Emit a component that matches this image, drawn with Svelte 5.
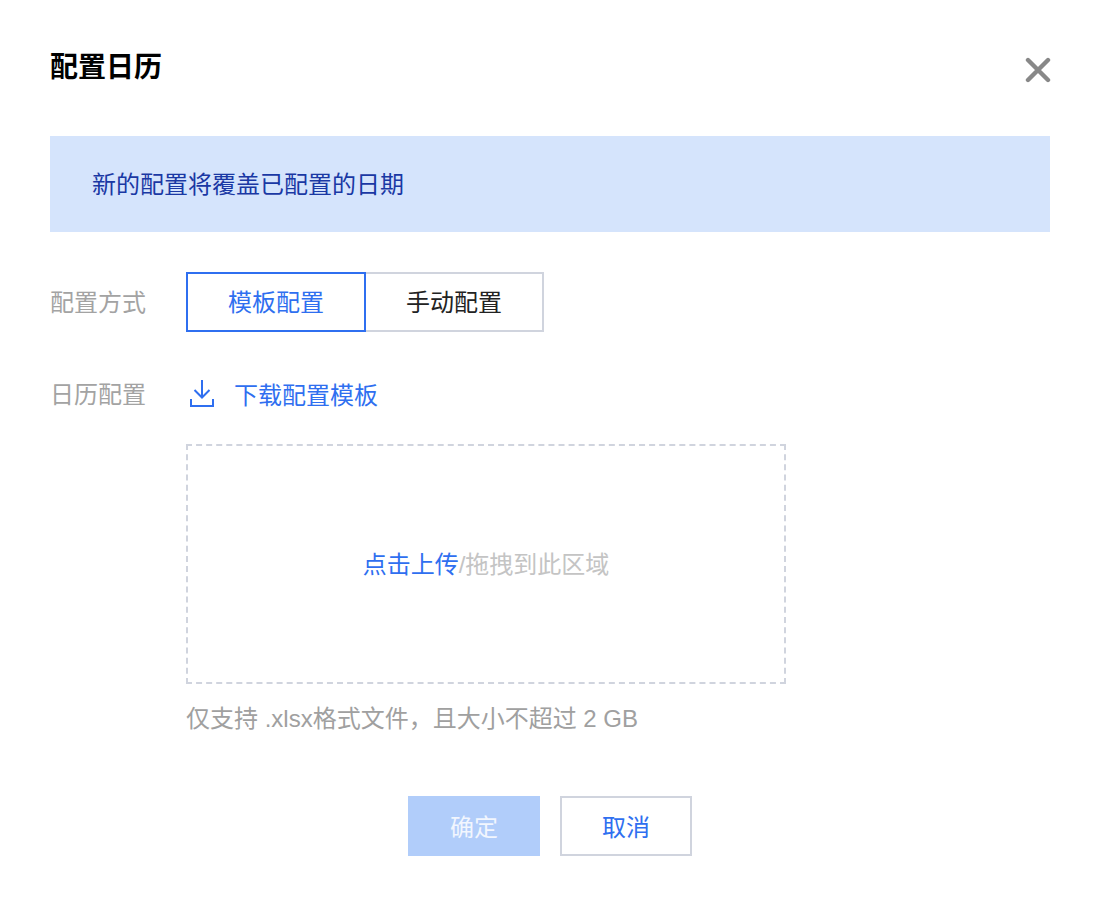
<script>
  let mode = $state('template');
</script>

<div class="dialog">
  <header class="head">
    <h2>配置日历</h2>
    <button class="close" aria-label="关闭">
      <svg width="26" height="26" viewBox="0 0 26 26">
        <path d="M3 3 L23 23 M23 3 L3 23" stroke="#888" stroke-width="4.400" stroke-linecap="round" fill="none" />
      </svg>
    </button>
  </header>

  <div class="alert">新的配置将覆盖已配置的日期</div>

  <div class="row mode-row">
    <span class="label">配置方式</span>
    <div class="segment">
      <button class:on={mode === 'template'} onclick={() => (mode = 'template')}>模板配置</button>
      <button class:on={mode === 'manual'} onclick={() => (mode = 'manual')}>手动配置</button>
    </div>
  </div>

  <div class="row cal-row">
    <span class="label">日历配置</span>
    <div class="cal-body">
      <a class="download" href="#top">
        <svg width="24" height="27" viewBox="0 0 24 27" fill="none" stroke="#2f6ff0" stroke-width="2">
          <path d="M12 0 V17 M4.500 10 L12 17.500 L19.500 10 M1 19 V26 H23 V19" />
        </svg>
        下载配置模板
      </a>
      <div class="drop"><span class="link">点击上传</span>/拖拽到此区域</div>
      <p class="hint">仅支持 .xlsx格式文件，且大小不超过 2 GB</p>
    </div>
  </div>

  <footer class="foot">
    <button class="btn primary">确定</button>
    <button class="btn">取消</button>
  </footer>
</div>

<style>
  :global(body) {
    margin: 0;
    background: #fff;
  }
  .dialog {
    width: 1098px;
    height: 904px;
    box-sizing: border-box;
    padding: 48px 48px 0 50px;
    font-family: "Liberation Sans", "Noto Sans CJK SC", sans-serif;
    font-size: 24px;
    color: #000;
  }
  button {
    font: inherit;
    background: #fff;
    cursor: pointer;
  }
  .head {
    display: flex;
    justify-content: space-between;
    align-items: flex-start;
    height: 88px;
  }
  h2 {
    margin: 0;
    font-size: 28px;
    line-height: 40px;
    font-weight: 700;
  }
  .close {
    border: 0;
    padding: 0;
    margin: 9px -1px 0 0;
    width: 26px;
    height: 26px;
    display: flex;
  }
  .alert {
    box-sizing: border-box;
    height: 96px;
    padding: 0 42px 4px;
    display: flex;
    align-items: center;
    background: #d5e4fc;
    color: #1a38a4;
  }
  .row {
    display: flex;
  }
  .label {
    width: 136px;
    color: #a3a3a3;
    line-height: 62px;
    height: 60px;
    flex-shrink: 0;
  }
  .mode-row {
    margin-top: 40px;
  }
  .segment {
    display: flex;
  }
  .segment button {
    box-sizing: border-box;
    width: 180px;
    height: 60px;
    padding: 0 0 3px;
    border: 2px solid #d0d4de;
    color: #222;
  }
  .segment button + button {
    margin-left: -2px;
  }
  .segment button.on {
    position: relative;
    z-index: 1;
    border-color: #2f6ff0;
    color: #2f6ff0;
  }
  .cal-row {
    margin-top: 32px;
  }
  .download {
    display: flex;
    align-items: center;
    gap: 20px;
    height: 58px;
    padding-left: 4px;
    color: #2f6ff0;
    text-decoration: none;
  }
  .drop {
    box-sizing: border-box;
    width: 600px;
    height: 240px;
    margin-top: 22px;
    padding-bottom: 4px;
    border: 2px dashed #d0d4de;
    display: flex;
    align-items: center;
    justify-content: center;
    color: #c4c4c4;
  }
  .link {
    color: #2f6ff0;
  }
  .hint {
    margin: 16px 0 0;
    line-height: 38px;
    color: #a0a0a0;
  }
  .foot {
    display: flex;
    justify-content: center;
    gap: 20px;
    margin-top: 58px;
  }
  .btn {
    box-sizing: border-box;
    width: 132px;
    height: 60px;
    padding: 0 0 2px;
    border: 2px solid #d0d4de;
    color: #2f6ff0;
  }
  .btn.primary {
    border-color: #b1cdfa;
    background: #b1cdfa;
    color: #f2f6fe;
  }
</style>
